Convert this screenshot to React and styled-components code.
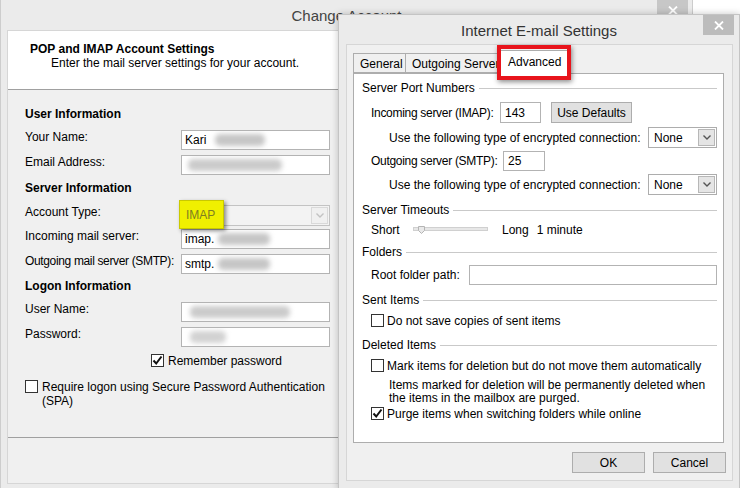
import React from "react";
import styled, { createGlobalStyle } from "styled-components";

const GlobalStyle = createGlobalStyle`
  html, body {
    margin: 0;
    padding: 0;
    background: #fff;
  }
  body {
    font-family: "Liberation Sans", Arial, sans-serif;
    font-size: 12px;
    color: #000;
  }
  * {
    box-sizing: border-box;
  }
`;

const Desktop = styled.div`
  position: relative;
  width: 740px;
  height: 488px;
  overflow: hidden;
  background: #fff;
`;

const Window = styled.div`
  position: absolute;
  left: ${(p) => p.$left}px;
  top: ${(p) => p.$top}px;
  width: ${(p) => p.$width}px;
  height: ${(p) => p.$height}px;
  background: #ebebeb;
  border: 1px solid ${(p) => p.$border};
  box-shadow: ${(p) => p.$shadow || "none"};
  display: flex;
  flex-direction: column;
`;

const TitleBar = styled.div`
  display: grid;
  grid-template-columns: 1fr auto 1fr;
  height: ${(p) => p.$height}px;
  flex-shrink: 0;
`;

const Title = styled.div`
  grid-column: 2;
  align-self: center;
  font-size: 15px;
  color: ${(p) => p.$color};
  white-space: nowrap;
  margin-top: ${(p) => p.$mt || 0}px;
`;

const CloseButton = styled.div`
  grid-column: 3;
  justify-self: end;
  align-self: start;
  width: 31px;
  height: 20px;
  margin-right: ${(p) => p.$mr}px;
  background: ${(p) => p.$bg};
  display: flex;
  align-items: center;
  justify-content: center;
`;

const Client = styled.div`
  flex: 1;
  margin: 0 ${(p) => p.$mr}px ${(p) => p.$mb}px ${(p) => p.$ml}px;
  background: #f0f0f0;
  border: 1px solid #d6d6d6;
  display: flex;
  flex-direction: column;
`;

/* ---------- Change Account (back window) ---------- */

const Header = styled.div`
  height: 59px;
  background: #fff;
  border-bottom: 1px solid #a0a0a0;
  padding: 11px 0 0 22px;
  line-height: 14px;
`;

const HeaderTitle = styled.div`
  font-weight: bold;
`;

const HeaderSub = styled.div`
  padding-left: 21px;
`;

const FormBody = styled.div`
  height: 348px;
  padding: 16px 0 0 17px;
  border-bottom: 1px solid #a0a0a0;
  display: flex;
  flex-direction: column;
`;

const SectionTitle = styled.div`
  font-weight: bold;
  line-height: 16px;
  margin-top: ${(p) => p.$mt || 0}px;
  margin-bottom: ${(p) => p.$mb || 0}px;
`;

const FormRow = styled.div`
  display: grid;
  grid-template-columns: 156px 149px;
  height: ${(p) => p.$h || 20}px;
  margin-top: ${(p) => p.$mt || 0}px;
`;

const FormLabel = styled.div`
  line-height: 15px;
  align-self: start;
  white-space: nowrap;
  letter-spacing: ${(p) => (p.$tight ? "-0.35px" : "normal")};
`;

const TextBox = styled.div`
  display: flex;
  align-items: center;
  height: ${(p) => p.$h || 20}px;
  width: ${(p) => (p.$w ? `${p.$w}px` : "auto")};
  flex: ${(p) => (p.$grow ? 1 : "none")};
  margin-right: ${(p) => p.$mr || 0}px;
  padding-left: ${(p) => p.$pl || 3}px;
  background: #fff;
  border: 1px solid #b3b3b3;
  white-space: nowrap;
  overflow: hidden;
`;

const Redact = styled.span`
  display: inline-block;
  width: ${(p) => p.$w}px;
  height: 12px;
  margin-left: ${(p) => p.$ml || 0}px;
  background: ${(p) => p.$c || "#c6c6c6"};
  filter: blur(2.5px);
  border-radius: 5px;
`;

const DisabledSelect = styled.div`
  position: relative;
  height: 21px;
  border: 1px solid #c3c3c3;
  background: #f3f3f3;
  display: flex;
  justify-content: flex-end;
  align-items: center;
  padding-right: 1px;
`;

const Highlight = styled.div`
  position: absolute;
  left: -3px;
  top: -6px;
  width: 45px;
  height: 29px;
  background: #f0f000;
  border: 1px solid #c9c900;
  box-shadow: 2px 2px 4px rgba(0, 0, 0, 0.45);
  color: #7f7f20;
  padding: 7px 0 0 6px;
  line-height: 14px;
`;

const ArrowBox = styled.div`
  width: 17px;
  height: 17px;
  display: flex;
  align-items: center;
  justify-content: center;
  background: ${(p) => (p.$disabled ? "#f0f0f0" : "#e5e5e5")};
  border: 1px solid ${(p) => (p.$disabled ? "#d9d9d9" : "#b7b7b7")};
`;

const CheckRow = styled.div`
  display: flex;
  align-items: flex-start;
  gap: ${(p) => p.$gap || 4}px;
  padding-left: ${(p) => p.$indent || 0}px;
  margin-top: ${(p) => p.$mt || 0}px;
  line-height: 14px;
`;

const Box = styled.div`
  width: 13px;
  height: 13px;
  flex-shrink: 0;
  border: 1px solid #333;
  background: #fff;
  display: flex;
  align-items: center;
  justify-content: center;
`;

const CheckText = styled.div`
  max-width: ${(p) => (p.$max ? `${p.$max}px` : "none")};
`;

/* ---------- Internet E-mail Settings (front window) ---------- */

const TabStrip = styled.div`
  display: flex;
  align-items: flex-end;
  height: 28px;
  padding-left: 6px;
`;

const Tab = styled.div`
  position: relative;
  height: ${(p) => (p.$active ? 24 : 20)}px;
  width: ${(p) => p.$w}px;
  margin-left: ${(p) => p.$ml || 0}px;
  margin-bottom: ${(p) => (p.$active ? -1 : 0)}px;
  z-index: ${(p) => (p.$active ? 2 : 1)};
  background: ${(p) => (p.$active ? "#fff" : "#f0f0f0")};
  border: 1px solid #adadad;
  border-bottom: ${(p) => (p.$active ? "none" : "1px solid #adadad")};
  padding: ${(p) => (p.$active ? "4px 0 0 7px" : "3px 0 0 6px")};
  line-height: 14px;
  white-space: nowrap;
  overflow: ${(p) => (p.$active ? "visible" : "hidden")};
`;

const RedBox = styled.div`
  position: absolute;
  left: -4px;
  top: -6px;
  width: 74px;
  height: 35px;
  border: 4px solid #e8141c;
  box-shadow: 1px 2px 5px rgba(0, 0, 0, 0.45);
`;

const Panel = styled.div`
  margin-left: 6px;
  width: 371px;
  height: 370px;
  background: #fff;
  border: 1px solid #adadad;
  display: flex;
  flex-direction: column;
`;

const GroupLabel = styled.div`
  display: flex;
  align-items: center;
  gap: 4px;
  height: 16px;
  padding: 0 6px 0 8px;
  margin-top: ${(p) => p.$mt}px;
  &::after {
    content: "";
    flex: 1;
    height: 1px;
    background: #c9c9c9;
  }
`;

const PanelRow = styled.div`
  display: flex;
  align-items: center;
  height: ${(p) => p.$h}px;
  margin-top: ${(p) => p.$mt}px;
  padding-left: ${(p) => p.$indent}px;
`;

const RowLabel = styled.div`
  width: ${(p) => (p.$w ? `${p.$w}px` : "auto")};
  flex-shrink: 0;
  white-space: nowrap;
  letter-spacing: ${(p) => (p.$tight ? "-0.3px" : "normal")};
`;

const Button = styled.div`
  width: ${(p) => p.$w}px;
  height: ${(p) => p.$h || 21}px;
  margin-left: ${(p) => p.$ml || 0}px;
  background: #e1e1e1;
  border: 1px solid #adadad;
  display: flex;
  align-items: center;
  justify-content: center;
`;

const Select = styled.div`
  width: 69px;
  height: 21px;
  margin-left: auto;
  margin-right: 6px;
  background: #fff;
  border: 1px solid #adadad;
  display: flex;
  align-items: center;
  justify-content: space-between;
  padding: 0 1px 0 5px;
`;

const SliderText = styled.span`
  margin-left: ${(p) => p.$ml}px;
`;

const Note = styled.div`
  padding-left: 35px;
  margin-top: ${(p) => p.$mt}px;
  line-height: 13px;
`;

const ButtonBar = styled.div`
  display: flex;
  justify-content: flex-end;
  padding-right: 6px;
  margin-top: 9px;
`;

const CloseIcon = () => (
  <svg width="10" height="9" viewBox="0 0 10 9">
    <path d="M1 0.5 L9 8.5 M9 0.5 L1 8.5" stroke="#fff" strokeWidth="1.8" />
  </svg>
);

const Chevron = ({ color }) => (
  <svg width="8" height="5" viewBox="0 0 8 5">
    <path d="M0.5 0.5 L4 4 L7.5 0.5" stroke={color} strokeWidth="1.4" fill="none" />
  </svg>
);

const Check = () => (
  <svg width="11" height="11" viewBox="0 0 11 11">
    <path d="M1.5 5.5 L4.2 8.5 L9.5 1.5" stroke="#111" strokeWidth="2" fill="none" />
  </svg>
);

const CheckBox = ({ checked }) => <Box>{checked && <Check />}</Box>;

const Slider = () => (
  <svg width="76" height="10" viewBox="0 0 76 10" style={{ marginLeft: 14 }}>
    <rect x="0.5" y="2.5" width="74" height="3" fill="#e7e7e7" stroke="#d0d0d0" />
    <path d="M5.5 1.5 H11.5 V5.5 L8.5 8.5 L5.5 5.5 Z" fill="#e9e9e9" stroke="#b4b4b4" />
  </svg>
);

const App = () => {
  return (
    <>
      <GlobalStyle />
      <Desktop>
        <Window $left={0} $top={-1} $width={693} $height={491} $border="#cdcdcd">
          <TitleBar $height={30}>
            <Title $color="#444">Change Account</Title>
            <CloseButton $mr={4} $bg="#c7c7c7">
              <CloseIcon />
            </CloseButton>
          </TitleBar>
          <Client $ml={6} $mr={6} $mb={5}>
            <Header>
              <HeaderTitle>POP and IMAP Account Settings</HeaderTitle>
              <HeaderSub>Enter the mail server settings for your account.</HeaderSub>
            </Header>
            <FormBody>
              <SectionTitle $mb={8}>User Information</SectionTitle>
              <FormRow>
                <FormLabel>Your Name:</FormLabel>
                <TextBox>
                  Kari
                  <Redact $w={50} $ml={9} />
                </TextBox>
              </FormRow>
              <FormRow $mt={5}>
                <FormLabel>Email Address:</FormLabel>
                <TextBox>
                  <Redact $w={94} $ml={3} $c="#cbcbcb" />
                </TextBox>
              </FormRow>

              <SectionTitle $mt={5} $mb={9}>
                Server Information
              </SectionTitle>
              <FormRow $h={21}>
                <FormLabel>Account Type:</FormLabel>
                <DisabledSelect>
                  <Highlight>IMAP</Highlight>
                  <ArrowBox $disabled>
                    <Chevron color="#c2c2c2" />
                  </ArrowBox>
                </DisabledSelect>
              </FormRow>
              <FormRow $mt={3}>
                <FormLabel>Incoming mail server:</FormLabel>
                <TextBox>
                  imap.
                  <Redact $w={52} $ml={4} />
                </TextBox>
              </FormRow>
              <FormRow $mt={5}>
                <FormLabel $tight>Outgoing mail server (SMTP):</FormLabel>
                <TextBox>
                  smtp.
                  <Redact $w={52} $ml={4} />
                </TextBox>
              </FormRow>

              <SectionTitle $mt={4} $mb={8}>
                Logon Information
              </SectionTitle>
              <FormRow>
                <FormLabel>User Name:</FormLabel>
                <TextBox>
                  <Redact $w={100} $ml={5} $c="#cbcbcb" />
                </TextBox>
              </FormRow>
              <FormRow $mt={5}>
                <FormLabel>Password:</FormLabel>
                <TextBox>
                  <Redact $w={36} $ml={5} $c="#d2d2d2" />
                </TextBox>
              </FormRow>

              <CheckRow $indent={126} $mt={7}>
                <CheckBox checked />
                <CheckText>Remember password</CheckText>
              </CheckRow>
              <CheckRow $mt={12}>
                <CheckBox />
                <CheckText $max={292}>
                  Require logon using Secure Password Authentication (SPA)
                </CheckText>
              </CheckRow>
            </FormBody>
          </Client>
        </Window>

        <Window
          $left={338}
          $top={14}
          $width={402}
          $height={476}
          $border="#c4c4c4"
          $shadow="0 0 7px rgba(0,0,0,0.22)"
        >
          <TitleBar $height={29}>
            <Title $color="#333" $mt={2}>
              Internet E-mail Settings
            </Title>
            <CloseButton $mr={5} $bg="#bcbcbc">
              <CloseIcon />
            </CloseButton>
          </TitleBar>
          <Client $ml={7} $mr={6} $mb={8}>
            <TabStrip>
              <Tab $w={53}>General</Tab>
              <Tab $w={97} $ml={-1}>
                Outgoing Server
              </Tab>
              <Tab $w={68} $ml={-2} $active>
                Advanced
                <RedBox />
              </Tab>
            </TabStrip>
            <Panel>
              <GroupLabel $mt={6}>Server Port Numbers</GroupLabel>
              <PanelRow $h={21} $mt={6} $indent={17}>
                <RowLabel $w={129} $tight>
                  Incoming server (IMAP):
                </RowLabel>
                <TextBox $w={41} $h={21} $pl={4}>
                  143
                </TextBox>
                <Button $w={81} $ml={10}>
                  Use Defaults
                </Button>
              </PanelRow>
              <PanelRow $h={21} $mt={4} $indent={35}>
                <RowLabel>Use the following type of encrypted connection:</RowLabel>
                <Select>
                  None
                  <ArrowBox>
                    <Chevron color="#555" />
                  </ArrowBox>
                </Select>
              </PanelRow>
              <PanelRow $h={20} $mt={3} $indent={17}>
                <RowLabel $w={132} $tight>
                  Outgoing server (SMTP):
                </RowLabel>
                <TextBox $w={42} $pl={4}>
                  25
                </TextBox>
              </PanelRow>
              <PanelRow $h={21} $mt={3} $indent={35}>
                <RowLabel>Use the following type of encrypted connection:</RowLabel>
                <Select>
                  None
                  <ArrowBox>
                    <Chevron color="#555" />
                  </ArrowBox>
                </Select>
              </PanelRow>

              <GroupLabel $mt={7}>Server Timeouts</GroupLabel>
              <PanelRow $h={16} $mt={4} $indent={17}>
                <RowLabel $w={28}>Short</RowLabel>
                <Slider />
                <SliderText $ml={13}>Long</SliderText>
                <SliderText $ml={8}>1 minute</SliderText>
              </PanelRow>

              <GroupLabel $mt={6}>Folders</GroupLabel>
              <PanelRow $h={20} $mt={5} $indent={17}>
                <RowLabel $w={98}>Root folder path:</RowLabel>
                <TextBox $grow $mr={6} />
              </PanelRow>

              <GroupLabel $mt={7}>Sent Items</GroupLabel>
              <CheckRow $indent={17} $mt={6} $gap={3}>
                <CheckBox />
                <CheckText>Do not save copies of sent items</CheckText>
              </CheckRow>

              <GroupLabel $mt={9}>Deleted Items</GroupLabel>
              <CheckRow $indent={17} $mt={6} $gap={3}>
                <CheckBox />
                <CheckText>Mark items for deletion but do not move them automatically</CheckText>
              </CheckRow>
              <Note $mt={6}>
                Items marked for deletion will be permanently deleted when
                <br />
                the items in the mailbox are purged.
              </Note>
              <CheckRow $indent={17} $mt={2} $gap={3}>
                <CheckBox checked />
                <CheckText>Purge items when switching folders while online</CheckText>
              </CheckRow>
            </Panel>
            <ButtonBar>
              <Button $w={73}>OK</Button>
              <Button $w={73} $ml={8}>
                Cancel
              </Button>
            </ButtonBar>
          </Client>
        </Window>
      </Desktop>
    </>
  );
};

export default App;
